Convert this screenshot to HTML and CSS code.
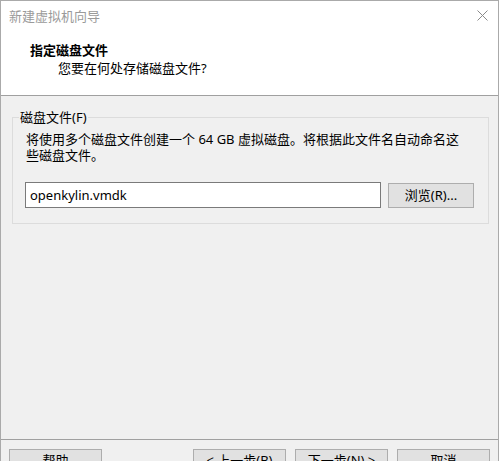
FILE: index.html
```html
<!DOCTYPE html>
<html lang="zh-CN">
<head>
<meta charset="utf-8">
<title>新建虚拟机向导</title>
<link rel="stylesheet" href="styles.css">
</head>
<body>
<div class="window">
  <div class="titlebar">
    <span class="title">新建虚拟机向导</span>
    <svg class="close" width="11" height="11" viewBox="0 0 11 11"><path d="M0.5 0.5 L10.5 10.5 M10.5 0.5 L0.5 10.5" stroke="#8a8a8a" stroke-width="1" fill="none"/></svg>
  </div>
  <div class="header">
    <div class="heading">指定磁盘文件</div>
    <div class="subheading">您要在何处存储磁盘文件?</div>
  </div>
  <div class="content">
    <div class="group">
      <span class="legend">磁盘文件(F)</span>
      <p class="desc"><span class="line">将使用多个磁盘文件创建一个 64 GB 虚拟磁盘。将根据此文件名自动命名这</span><span class="line">些磁盘文件。</span></p>
      <div class="filerow">
        <div class="input">openkylin.vmdk</div>
        <div class="btn browse">浏览(R)...</div>
      </div>
    </div>
  </div>
  <div class="footer">
    <div class="btn">帮助</div>
    <div class="spacer"></div>
    <div class="btn">&lt; 上一步(B)</div>
    <div class="btn">下一步(N) &gt;</div>
    <div class="btn">取消</div>
  </div>
</div>
</body>
</html>
```
FILE: styles.css
```css
html, body {
  margin: 0;
  padding: 0;
  background: #ffffff;
}
body {
  font-family: "Noto Sans", "Noto Sans CJK SC", sans-serif;
  font-size: 13px;
  color: #000;
  overflow: hidden;
}
.window {
  box-sizing: border-box;
  width: 499px;
  height: 484px;
  border: 1px solid #aaaaaa;
  border-bottom: none;
  display: flex;
  flex-direction: column;
  background: #f0f0f0;
}
.titlebar {
  height: 30px;
  flex: none;
  background: #fff;
  display: flex;
  align-items: center;
  padding: 0 10px 0 8px;
}
.title {
  color: #9a9a9a;
  line-height: 18px;
  flex: 1;
}
.close {
  display: block;
  margin-top: -1px;
}
.header {
  height: 64px;
  flex: none;
  background: #fff;
  border-bottom: 1px solid #a0a0a0;
  box-sizing: content-box;
}
.heading {
  font-weight: bold;
  line-height: 18px;
  padding: 10px 0 0 29px;
}
.subheading {
  line-height: 18px;
  padding-left: 57px;
}
.content {
  flex: 1;
  padding: 21px 0 0 11px;
}
.group {
  position: relative;
  box-sizing: border-box;
  width: 477px;
  height: 107px;
  border: 1px solid #dcdcdc;
  padding: 13px 0 0 13px;
}
.legend {
  position: absolute;
  top: -10px;
  left: 6px;
  padding: 0 1px;
  background: #f0f0f0;
  line-height: 18px;
}
.desc {
  margin: 0;
  line-height: 16px;
}
.line {
  display: block;
  white-space: nowrap;
}
.filerow {
  display: flex;
  align-items: center;
  margin-top: 19px;
  margin-left: -1px;
}
.input {
  box-sizing: border-box;
  width: 356px;
  height: 26px;
  background: #fff;
  border: 1px solid #7a7a7a;
  padding-left: 4px;
  line-height: 24px;
}
.btn {
  box-sizing: border-box;
  width: 93px;
  height: 23px;
  background: #e1e1e1;
  border: 1px solid #adadad;
  text-align: center;
  line-height: 21px;
  flex: none;
}
.browse {
  width: 86px;
  height: 25px;
  line-height: 23px;
  margin-left: 7px;
  margin-top: 1px;
}
.footer {
  flex: none;
  height: 35px;
  border-top: 1px solid #a0a0a0;
  padding: 9px 8px 0 8px;
  box-sizing: content-box;
  display: flex;
  align-items: flex-start;
  gap: 9px;
}
.spacer {
  flex: 1;
}
```
